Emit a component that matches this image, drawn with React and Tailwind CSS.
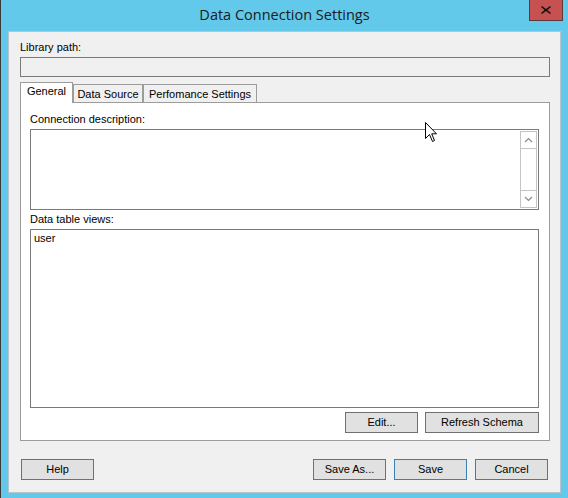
import React from "react";

function Btn({ children, className = "", primary = false }) {
  return (
    <div
      className={
        "h-[21px] flex items-center justify-center bg-[#e1e1e1] border text-[11px] text-black leading-none " +
        (primary ? "border-[#3c7fb1] " : "border-[#707070] ") +
        className
      }
    >
      {children}
    </div>
  );
}

function Chevron({ up }) {
  return (
    <svg width="9" height="6" viewBox="0 0 9 6" fill="none" stroke="#8a8a8a" strokeWidth="1.2">
      {up ? <polyline points="1,5 4.5,1.5 8,5" /> : <polyline points="1,1 4.5,4.5 8,1" />}
    </svg>
  );
}

export default function App() {
  return (
    <div
      className="relative w-[568px] h-[498px] bg-[#63c9ea] border-l border-[#3a3a3a] flex flex-col overflow-hidden"
      style={{ fontFamily: '"Liberation Sans", Arial, sans-serif' }}
    >
      {/* Title bar */}
      <div className="relative h-[31px] flex items-center justify-center shrink-0">
        <span className="text-[14.5px] text-[#1b1b1b] pb-[1px]" style={{ fontFamily: '"Open Sans", "Noto Sans", sans-serif' }}>
          Data Connection Settings
        </span>
        <div className="absolute top-[-1px] left-[528px] w-[34px] h-[22px] bg-[#c75050] border border-[#5b3a3a] flex items-center justify-center">
          <svg width="10" height="8" viewBox="0 0 10 8">
            <path d="M1 0 L5 3 L9 0 L10 1 L6.3 4 L10 7 L9 8 L5 5 L1 8 L0 7 L3.7 4 L0 1 Z" fill="#111" />
          </svg>
        </div>
      </div>

      {/* Client area */}
      <div className="ml-[7px] w-[553px] h-[462px] bg-[#f0f0f0] border border-[#b6c5cf] flex flex-col px-[11px]">
        <div className="mt-[8px] text-[11px] leading-[14px] text-black">Library path:</div>
        <div className="mt-[3px] h-[20px] w-[530px] bg-[#f0f0f0] border border-[#7a7a7a]" />

        {/* Tabs */}
        <div className="mt-[5px] flex items-end h-[21px] w-[530px]">
          <div className="relative z-10 h-[21px] w-[53px] bg-white border border-b-0 border-[#9c9c9c] flex items-center justify-center text-[11px] text-black pb-[3px]">
            General
          </div>
          <div className="h-[19px] w-[70px] bg-[#f0f0f0] border border-b-0 border-[#9c9c9c] flex items-center justify-center text-[11px] text-black">
            Data Source
          </div>
          <div className="h-[19px] w-[114px] bg-[#f0f0f0] border border-b-0 border-[#9c9c9c] flex items-center justify-center text-[11px] text-black">
            Perfomance Settings
          </div>
        </div>

        {/* Tab panel */}
        <div className="w-[530px] h-[339px] -mt-[1px] bg-white border border-[#9c9c9c] flex flex-col px-[9px] pt-[9px]">
          <div className="text-[11px] leading-[14px] text-black">Connection description:</div>
          <div className="mt-[3px] h-[81px] w-[509px] bg-white border border-[#7a7a7a] flex justify-end p-[1px]">
            <div className="w-[17px] h-full border border-[#c4c4c4] flex flex-col">
              <div className="h-[17px] border-b border-[#c4c4c4] flex items-center justify-center">
                <Chevron up />
              </div>
              <div className="flex-1" />
              <div className="h-[17px] border-t border-[#c4c4c4] flex items-center justify-center">
                <Chevron />
              </div>
            </div>
          </div>
          <div className="mt-[2px] text-[11px] leading-[14px] text-black">Data table views:</div>
          <div className="mt-[3px] h-[179px] w-[509px] bg-white border border-[#7a7a7a] px-[3px] pt-[2px]">
            <div className="text-[11px] leading-[13px] text-black">user</div>
          </div>
          <div className="mt-[4px] flex justify-end gap-[7px] pr-[1px]">
            <Btn className="w-[73px]">Edit...</Btn>
            <Btn className="w-[114px]">Refresh Schema</Btn>
          </div>
        </div>

        {/* Bottom buttons */}
        <div className="mt-[18px] flex items-center pl-[1px] pr-[1px]">
          <Btn className="w-[73px]">Help</Btn>
          <div className="flex-1" />
          <div className="flex gap-[8px]">
            <Btn className="w-[73px]">Save As...</Btn>
            <Btn className="w-[73px]" primary>Save</Btn>
            <Btn className="w-[73px]">Cancel</Btn>
          </div>
        </div>
      </div>

      {/* Mouse cursor */}
      <svg className="absolute left-[424px] top-[122px]" width="13" height="21" viewBox="0 0 13 21">
        <path d="M0.5 0.5 L0.5 16.5 L4.5 12.5 L7.5 19.5 L9.5 18.5 L6.7 11.8 L11.5 11.8 Z" fill="#fff" stroke="#000" strokeWidth="1" strokeLinejoin="miter" />
      </svg>
    </div>
  );
}
